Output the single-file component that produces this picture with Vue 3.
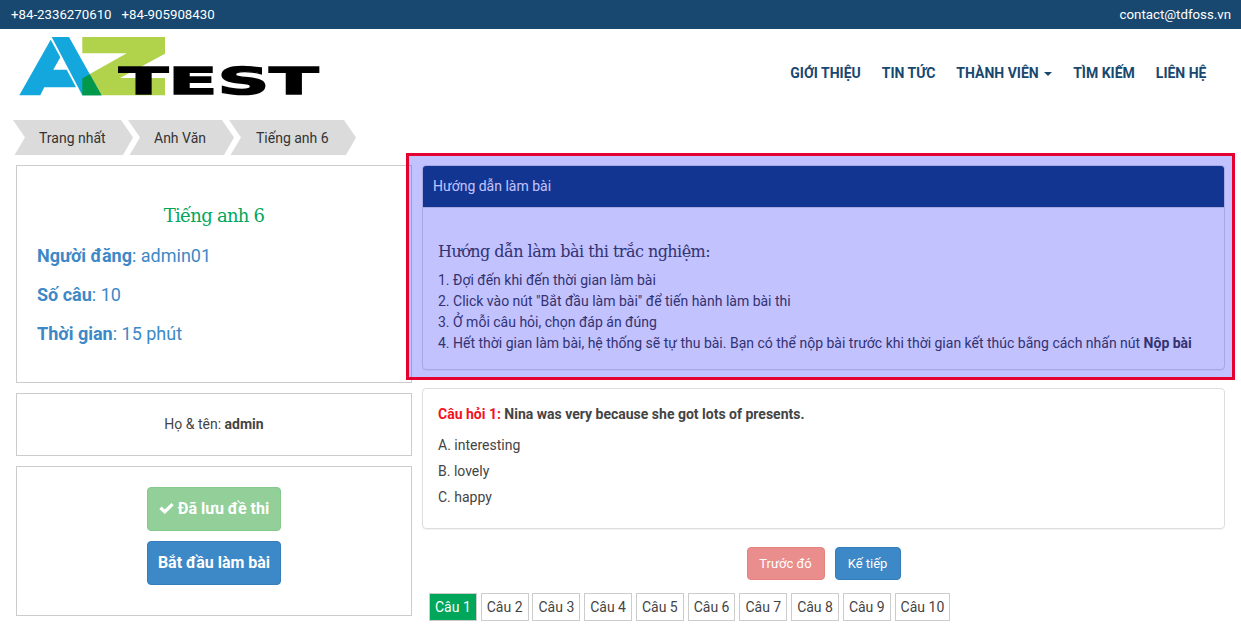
<script setup>
const crumbs = ['Trang nhất', 'Anh Văn', 'Tiếng anh 6']
const answers = ['A. interesting', 'B. lovely', 'C. happy']
const steps = [
  '1. Đợi đến khi đến thời gian làm bài',
  '2. Click vào nút "Bắt đầu làm bài" để tiến hành làm bài thi',
  '3. Ở mỗi câu hỏi, chọn đáp án đúng',
]
</script>

<template>
  <div class="page">
    <div class="topbar">
      <div class="phones"><span>+84-2336270610</span><span>+84-905908430</span></div>
      <span>contact@tdfoss.vn</span>
    </div>
    <header class="header">
      <svg class="logo" width="310" height="76" viewBox="19 36 310 76">
        <path fill="#b1d34b" d="M82.3 37H165V53.7L120 78H165V95.2H82.3V78.3L126.7 53.3H82.3Z" />
        <path fill="#14a7de" d="M19.3 95.2L50.7 39.7L60.3 57.3L53.3 69.7H66.7L76 87.3H44.3L40.3 95.2ZM51.7 37H69L101.5 95.2H82.3Z" />
        <path fill="#00984b" d="M82.3 78.3L89.8 74.2L101.5 95.2H82.3Z" />
        <text class="wordmark" x="119" y="94.4" textLength="199.5" lengthAdjust="spacingAndGlyphs">TEST</text>
      </svg>
      <nav class="menu">
        <a>GIỚI THIỆU</a><a>TIN TỨC</a><a>THÀNH VIÊN<i class="caret"></i></a><a>TÌM KIẾM</a><a>LIÊN HỆ</a>
      </nav>
    </header>
    <div class="crumbs">
      <a v-for="c in crumbs" :key="c">{{ c }}</a>
    </div>
    <main class="main">
      <aside class="side">
        <section class="box info">
          <h2>Tiếng anh 6</h2>
          <p><b>Người đăng</b>: admin01</p>
          <p><b>Số câu</b>: 10</p>
          <p><b>Thời gian</b>: 15 phút</p>
        </section>
        <section class="box user"><span>Họ &amp; tên: <b>admin</b></span></section>
        <section class="box actions">
          <button class="big saved">
            <svg width="15" height="12" viewBox="0 0 15 12"><path d="M1.4 5.7L5.8 9.7L13.6 2.1" fill="none" stroke="#fff" stroke-width="3.3" /></svg>
            Đã lưu đề thi
          </button>
          <button class="big">Bắt đầu làm bài</button>
        </section>
      </aside>
      <div class="content">
        <section class="panel guide">
          <div class="panel-head">Hướng dẫn làm bài</div>
          <div class="guide-body">
            <h3>Hướng dẫn làm bài thi trắc nghiệm:</h3>
            <div v-for="s in steps" :key="s">{{ s }}</div>
            <div>4. Hết thời gian làm bài, hệ thống sẽ tự thu bài. Bạn có thể nộp bài trước khi thời gian kết thúc bằng cách nhấn nút <b>Nộp bài</b></div>
          </div>
        </section>
        <section class="panel question">
          <div class="title"><span class="red">Câu hỏi 1:</span> Nina was very because she got lots of presents.</div>
          <div v-for="a in answers" :key="a" class="answer">{{ a }}</div>
        </section>
        <div class="pager">
          <button class="prev">Trước đó</button>
          <button class="next">Kế tiếp</button>
        </div>
        <div class="numbers">
          <a v-for="n in 10" :key="n" :class="{ active: n === 1 }">Câu {{ n }}</a>
        </div>
      </div>
      <div class="highlight"></div>
    </main>
  </div>
</template>

<style>
body { margin: 0; overflow: hidden; background: #fff; }
</style>

<style scoped>
* { box-sizing: border-box; }
.page { width: 1241px; height: 624px; overflow: hidden; font: 14px/21px Roboto, sans-serif; color: #444; }
.topbar { height: 29px; background: #18486f; color: #fff; display: flex; justify-content: space-between; padding: 4px 10px 0 11px; font-size: 13.25px; }
.phones { display: flex; gap: 10px; }
.header { height: 91px; display: flex; justify-content: space-between; align-items: flex-start; padding: 7px 34px 0 19px; }
.logo { display: block; }
.wordmark { font: bold 38px "DejaVu Sans", sans-serif; fill: #000; stroke: #000; stroke-width: 1.4px; }
.menu { display: flex; gap: 21px; padding: 27px 0.5px 0 0; font-weight: 700; color: #18486f; }
.menu a { display: flex; align-items: center; }
.caret { border: 4px solid transparent; border-top-color: #18486f; border-bottom: 0; margin-left: 5.5px; margin-top: 1px; }
.crumbs { display: flex; height: 35px; padding-left: 13px; line-height: 36px; color: #333; }
.crumbs a { width: 120px; padding-left: 26px; background: #dbdbdb; clip-path: polygon(0 0, calc(100% - 12px) 0, 100% 50%, calc(100% - 10px) 100%, 1.5px 100%, 12px 50%); }
.crumbs a + a { margin-left: -5px; width: 106px; padding-left: 26px; }
.crumbs a:last-child { width: 127px; padding-left: 27px; }
.main { position: relative; display: flex; gap: 10px; padding: 10px 16px 0; }
.side { width: 396px; display: flex; flex-direction: column; gap: 10px; }
.box { border: 1px solid #ccc; }
.info { height: 218px; padding: 37px 20px 0; font-size: 18px; color: #3d88c6; }
.info h2 { margin: 0 0 14px; font: 18px/26px "Roboto Slab", "DejaVu Serif", serif; letter-spacing: -0.75px; text-align: center; color: #00a65a; }
.info p { margin: 0 0 13px; line-height: 26px; }
.user { height: 63px; display: flex; align-items: center; justify-content: center; }
.actions { height: 150px; padding-top: 20px; display: flex; flex-direction: column; align-items: center; gap: 10px; }
button { font-family: Roboto, sans-serif; color: #fff; border: 1px solid #357ebd; background: #3d88c6; border-radius: 4px; padding: 0; white-space: nowrap; }
.big { width: 134px; height: 44px; padding-bottom: 2px; font-size: 16px; font-weight: 700; }
.saved { background: #92cf99; border-color: #84c98c; display: flex; align-items: center; justify-content: center; gap: 4px; }
.content { width: 803px; }
.panel { border: 1px solid #ddd; border-radius: 4px; box-shadow: 0 1px 1px rgba(0, 0, 0, .05); }
.guide { height: 205px; overflow: hidden; }
.panel-head { height: 42px; padding: 10px 10px 0; background: #17466f; border-bottom: 1px solid #ddd; color: #fff; }
.guide-body { padding: 31px 15px 0; white-space: nowrap; }
.guide h3 { margin: 0 0 5px; font: 16px/26px "Roboto Slab", "DejaVu Serif", serif; letter-spacing: -0.54px; }
.question { height: 141px; margin-top: 18px; padding: 15px; }
.title { font-weight: 700; margin-bottom: 7px; }
.red { color: #f5101d; }
.answer { line-height: 26px; }
.pager { display: flex; justify-content: center; gap: 10px; margin-top: 18px; }
.pager button { height: 33px; font-size: 13px; }
.prev { width: 78px; background: #e98e8d; border-color: #e58280; }
.next { width: 66px; }
.numbers { display: flex; gap: 3.95px; padding: 13px 0 0 7px; }
.numbers a { height: 28px; border: 1px solid #ccc; padding: 0 5px; line-height: 27px; white-space: nowrap; }
.numbers a.active { background: #00a65a; color: #fff; }
.highlight { position: absolute; left: 406px; top: -2px; width: 829px; height: 227px; border: 3px solid #e4002f; background: rgba(0, 0, 255, .24); background-clip: padding-box; }
</style>
